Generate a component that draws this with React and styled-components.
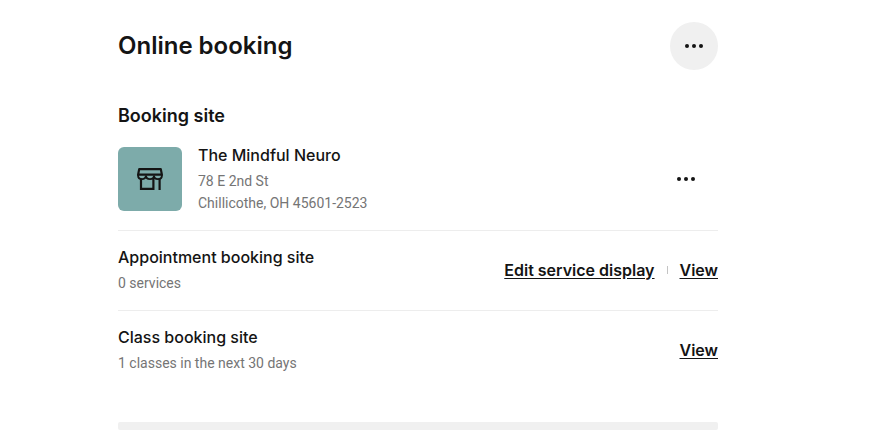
import styled, { createGlobalStyle } from "styled-components";

const listings = [
  {
    title: "Appointment booking site",
    detail: "0 services",
    actions: ["Edit service display", "View"],
  },
  {
    title: "Class booking site",
    detail: "1 classes in the next 30 days",
    actions: ["View"],
  },
];

const Dots = () => (
  <svg width="20" height="6" viewBox="0 0 20 6" fill="currentColor" aria-hidden="true">
    <circle cx="3" cy="3" r="2" />
    <circle cx="10" cy="3" r="2" />
    <circle cx="17" cy="3" r="2" />
  </svg>
);

const StoreIcon = () => (
  <svg
    width="28"
    height="24"
    viewBox="0 0 28 24"
    fill="none"
    stroke="currentColor"
    strokeWidth="2.2"
    aria-hidden="true"
  >
    <path d="M3.2 2.1h21.6l1.1 5.6H2.1z" strokeLinejoin="round" />
    <path
      d="M2.1 7.7v.8c0 4.8 7.9 4.8 7.9 0c0 4.8 8 4.8 8 0c0 4.8 7.9 4.8 7.9 0v-.8"
      strokeWidth="1.9"
    />
    <path d="M5 11.5v10.4h12.4V11.5M23.6 11.5V23" />
  </svg>
);

const App = () => {
  return (
    <>
      <GlobalStyle />
      <Page>
        <PageHeader>
          <h1>Online booking</h1>
          <MenuButton type="button" aria-label="More options" $filled>
            <Dots />
          </MenuButton>
        </PageHeader>
        <Section>
          <h2>Booking site</h2>
          <SiteRow>
            <Thumbnail>
              <StoreIcon />
            </Thumbnail>
            <RowText>
              <h3>The Mindful Neuro</h3>
              <p>78 E 2nd St</p>
              <p>Chillicothe, OH 45601-2523</p>
            </RowText>
            <MenuButton type="button" aria-label="Site options">
              <Dots />
            </MenuButton>
          </SiteRow>
          {listings.map((listing) => (
            <Row key={listing.title}>
              <RowText>
                <h3>{listing.title}</h3>
                <p>{listing.detail}</p>
              </RowText>
              <Actions>
                {listing.actions.map((action) => (
                  <li key={action}>
                    <a href="#">{action}</a>
                  </li>
                ))}
              </Actions>
            </Row>
          ))}
        </Section>
        <Divider />
      </Page>
    </>
  );
};

const GlobalStyle = createGlobalStyle`
  * {
    box-sizing: border-box;
    margin: 0;
    padding: 0;
  }

  body {
    background: #fff;
    color: #141414;
    font-family: Inter, "Liberation Sans", sans-serif;
  }
`;

const Page = styled.main`
  padding: 22px 161px 5px 118px;

  @media (max-width: 700px) {
    padding: 22px 24px 5px;
  }
`;

const PageHeader = styled.header`
  display: flex;
  align-items: center;
  justify-content: space-between;

  h1 {
    font-size: 24px;
    font-weight: 600;
    line-height: 32px;
  }
`;

const MenuButton = styled.button`
  display: flex;
  align-items: center;
  justify-content: center;
  width: ${(props) => (props.$filled ? "48px" : "64px")};
  height: 48px;
  border: none;
  border-radius: 24px;
  background: ${(props) => (props.$filled ? "#f0f0f0" : "transparent")};
  color: #141414;
  cursor: pointer;
`;

const Section = styled.section`
  padding: 32px 0;

  h2 {
    font-size: 18px;
    font-weight: 600;
    line-height: 28px;
  }
`;

const Row = styled.div`
  display: flex;
  align-items: center;
  justify-content: space-between;
  gap: 16px;
  padding: 14px 0 16px;

  & + & {
    border-top: 1px solid #ededed;
  }
`;

const SiteRow = styled.div`
  display: flex;
  align-items: center;
  gap: 16px;
  padding: 13px 0 16px;
  border-bottom: 1px solid #ededed;
`;

const Thumbnail = styled.div`
  display: flex;
  align-items: center;
  justify-content: center;
  width: 64px;
  height: 64px;
  border-radius: 6px;
  background: #7dabaa;
`;

const RowText = styled.div`
  flex: 1;

  h3 {
    margin-bottom: 3px;
    font-size: 16px;
    font-weight: 500;
    line-height: 24px;
  }

  p {
    color: #757575;
    font-family: Roboto, "Liberation Sans", sans-serif;
    font-size: 14px;
    line-height: 22px;
  }
`;

const Actions = styled.ul`
  display: flex;
  align-items: center;
  list-style: none;

  li + li {
    display: flex;
    align-items: center;
  }

  li + li::before {
    content: "";
    width: 1px;
    height: 8px;
    margin: 0 12px;
    background: #c4c4c4;
  }

  a {
    color: #141414;
    font-size: 16px;
    font-weight: 600;
    line-height: 24px;
    text-underline-offset: 2px;
  }
`;

const Divider = styled.hr`
  height: 8px;
  border: none;
  border-radius: 2px;
  background: #f0f0f0;
`;

export default App;
